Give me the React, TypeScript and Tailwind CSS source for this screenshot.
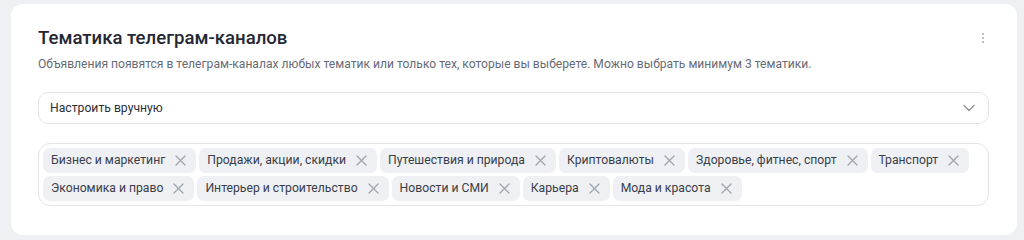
import React from 'react'

const topics = [
  'Бизнес и маркетинг',
  'Продажи, акции, скидки',
  'Путешествия и природа',
  'Криптовалюты',
  'Здоровье, фитнес, спорт',
  'Транспорт',
  'Экономика и право',
  'Интерьер и строительство',
  'Новости и СМИ',
  'Карьера',
  'Мода и красота',
]

function Cross() {
  return (
    <svg width="11" height="11" viewBox="0 0 11 11" fill="none" className="shrink-0">
      <path d="M1 1L10 10M10 1L1 10" stroke="#a0a4ad" strokeWidth="1.3" strokeLinecap="round" />
    </svg>
  )
}

export default function App() {
  return (
    <div className="w-[1024px] h-[240px] bg-[#eef0f4] pt-[4px] pl-[11px] pr-[7px] font-['Roboto',sans-serif] overflow-hidden">
      <div className="bg-white rounded-[12px] h-[231px] pl-[27px] pr-[28px] pt-[22px]">
        <div className="flex items-center justify-between">
          <h2 className="text-[18.6px] leading-[24px] font-medium text-[#252833]">Тематика телеграм-каналов</h2>
          <div className="flex flex-col gap-[2px] mr-[5px]">
            <span className="w-[2px] h-[2px] rounded-full bg-[#a3a7b0]" />
            <span className="w-[2px] h-[2px] rounded-full bg-[#a3a7b0]" />
            <span className="w-[2px] h-[2px] rounded-full bg-[#a3a7b0]" />
          </div>
        </div>
        <p className="mt-[6px] text-[12.1px] leading-[16px] text-[#676b76]">
          Объявления появятся в телеграм-каналах любых тематик или только тех, которые вы выберете. Можно выбрать минимум 3 тематики.
        </p>
        <div className="mt-[20px] h-[32px] border border-[#e2e4e9] rounded-[10px] flex items-center justify-between pl-[11px] pr-[13px]">
          <span className="text-[12.2px] text-[#2b2f3a]">Настроить вручную</span>
          <svg width="12" height="8" viewBox="0 0 12 8" fill="none">
            <path d="M1 1.5L6 6.5L11 1.5" stroke="#8f939d" strokeWidth="1.3" strokeLinecap="round" strokeLinejoin="round" />
          </svg>
        </div>
        <div className="mt-[19px] border border-[#e2e4e9] rounded-[12px] p-[4px] flex flex-wrap gap-x-[3px] gap-y-[3px]">
          {topics.map((t) => (
            <div key={t} className="h-[25px] bg-[#eef0f4] rounded-[7px] flex items-center pl-[8px] pr-[10px] gap-[10px]">
              <span className="text-[12.2px] text-[#3a3e49]">{t}</span>
              <Cross />
            </div>
          ))}
        </div>
      </div>
    </div>
  )
}
